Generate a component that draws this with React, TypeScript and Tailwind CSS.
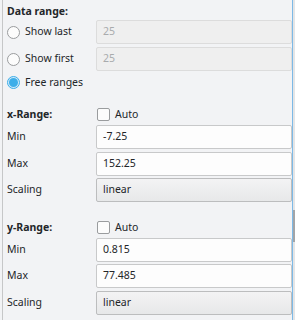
import React from "react";

const font = { fontFamily: '"Noto Sans", "Open Sans", sans-serif' };

function Radio({ checked }: { checked?: boolean }) {
  return checked ? (
    <div className="w-[13px] h-[13px] rounded-full border border-[#3daee9] bg-[#cfe9f8] flex items-center justify-center shrink-0">
      <div className="w-[9px] h-[9px] rounded-full bg-[#3daee9]" />
    </div>
  ) : (
    <div className="w-[13px] h-[13px] rounded-full border border-[#9a9c9e] bg-[#fcfcfc] shrink-0" />
  );
}

function Checkbox() {
  return <div className="w-[13px] h-[13px] rounded-[2px] border border-[#9a9c9e] bg-[#fcfcfc] shrink-0" />;
}

function Box({ children, kind }: { children: React.ReactNode; kind: "disabled" | "input" | "combo" }) {
  const cls =
    kind === "disabled"
      ? "bg-[#efefef] border-[#dcdcdc] text-[#a9abad]"
      : kind === "input"
      ? "bg-[#fdfdfd] border-[#c8c9ca] text-[#232629]"
      : "bg-gradient-to-b from-[#f3f3f4] to-[#e7e8e9] border-[#bcbdbe] text-[#232629]";
  return (
    <div className={`h-[24px] w-[196px] border rounded-[2px] flex items-center pl-[6px] ${cls}`}>{children}</div>
  );
}

function Row({ label, children, className = "" }: { label: React.ReactNode; children: React.ReactNode; className?: string }) {
  return (
    <div className={`flex items-center ${className}`}>
      <div className="w-[93px] pl-[4px] flex items-center">{label}</div>
      {children}
    </div>
  );
}

export default function App() {
  return (
    <div className="w-[295px] h-[320px] bg-[#f2f3f5] flex overflow-hidden text-[10.5px] text-[#232629]" style={font}>
      <div className="w-[2px]" />
      <div className="w-[291px] h-full border-l border-r border-l-[#c6c7c8] border-r-[#7db9e6] flex flex-col">
        <div className="h-[20px] pl-[4px] flex items-center pt-[3px] font-bold">Data range:</div>
        <Row label={<><Radio /><span className="ml-[5px]">Show last</span></>} className="h-[24px]">
          <Box kind="disabled">25</Box>
        </Row>
        <Row label={<><Radio /><span className="ml-[5px]">Show first</span></>} className="h-[24px] mt-[3px]">
          <Box kind="disabled">25</Box>
        </Row>
        <div className="h-[23px] pl-[4px] flex items-center">
          <Radio checked />
          <span className="ml-[5px]">Free ranges</span>
        </div>

        <Row label={<span className="font-bold">x-Range:</span>} className="h-[21px] mt-[10px]">
          <div className="flex items-center pl-[1px]">
            <Checkbox />
            <span className="ml-[5px]">Auto</span>
          </div>
        </Row>
        <Row label="Min" className="h-[24px]">
          <Box kind="input">-7.25</Box>
        </Row>
        <Row label="Max" className="h-[24px] mt-[3px]">
          <Box kind="input">152.25</Box>
        </Row>
        <Row label="Scaling" className="h-[24px] mt-[2px]">
          <Box kind="combo">linear</Box>
        </Row>

        <Row label={<span className="font-bold">y-Range:</span>} className="h-[21px] mt-[15px]">
          <div className="flex items-center pl-[1px]">
            <Checkbox />
            <span className="ml-[5px]">Auto</span>
          </div>
        </Row>
        <Row label="Min" className="h-[24px]">
          <Box kind="input">0.815</Box>
        </Row>
        <Row label="Max" className="h-[24px] mt-[2px]">
          <Box kind="input">77.485</Box>
        </Row>
        <Row label="Scaling" className="h-[24px] mt-[3px]">
          <Box kind="combo">linear</Box>
        </Row>
      </div>
      <div className="w-[2px] h-full bg-[#e4e5e6] flex flex-col">
        <div className="h-[210px]" />
        <div className="h-[32px] bg-[#a3a5a7]" />
      </div>
    </div>
  );
}
